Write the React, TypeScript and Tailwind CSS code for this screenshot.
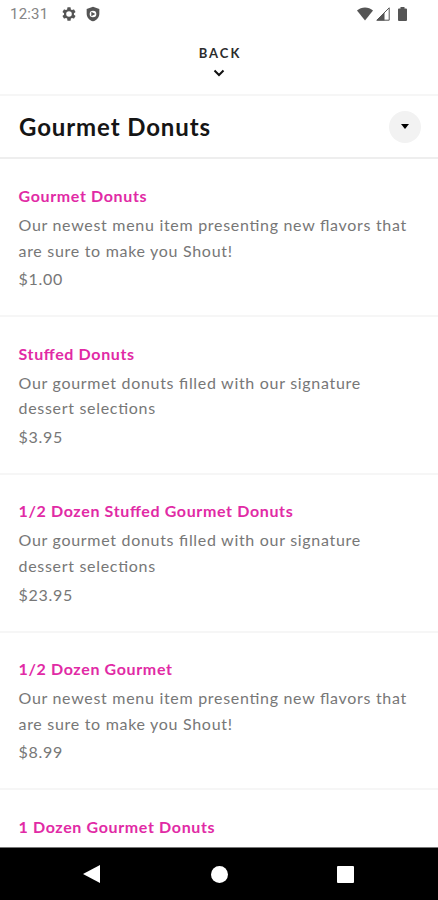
import { ReactNode } from "react";

type MenuItem = {
    name: string;
    description?: string;
    price?: string;
}

const items: MenuItem[] = [
    {
        name: "Gourmet Donuts",
        description: "Our newest menu item presenting new flavors that are sure to make you Shout!",
        price: "$1.00",
    },
    {
        name: "Stuffed Donuts",
        description: "Our gourmet donuts filled with our signature dessert selections",
        price: "$3.95",
    },
    {
        name: "1/2 Dozen Stuffed Gourmet Donuts",
        description: "Our gourmet donuts filled with our signature dessert selections",
        price: "$23.95",
    },
    {
        name: "1/2 Dozen Gourmet",
        description: "Our newest menu item presenting new flavors that are sure to make you Shout!",
        price: "$8.99",
    },
    {
        name: "1 Dozen Gourmet Donuts",
    },
];

export default function App() {
    return (
        <Screen>
            <StatusBar />
            <BackButton />
            <CategoryHeader />
            <main className="min-h-0 flex-1 overflow-hidden pt-[0.6px]">
                {items.map((item) => (
                    <MenuRow key={item.name} item={item} />
                ))}
            </main>
            <NavigationBar />
        </Screen>
    )
}

function Screen({ children }: { children: ReactNode }) {
    return (
        <div className="flex h-[900px] w-full flex-col overflow-hidden bg-white font-[Lato,sans-serif] [font-feature-settings:'liga']">
            {children}
        </div>
    )
}

function StatusBar() {
    return (
        <div className="flex h-7 shrink-0 items-center pr-[31px] pl-[10px] text-[#555]">
            <span className="w-[51px] font-[Roboto,sans-serif] text-[15px] tracking-[0.2px] text-[#858585]">12:31</span>
            <svg className="h-4 w-4" viewBox="0 0 24 24" fill="currentColor">
                <path fillRule="evenodd" d="M19.4 13a7 7 0 0 0 0-2l2.1-1.6a.5.5 0 0 0 .1-.7l-2-3.4a.5.5 0 0 0-.6-.2l-2.5 1a7 7 0 0 0-1.7-1L14.4 2.4a.5.5 0 0 0-.5-.4h-3.8a.5.5 0 0 0-.5.4l-.4 2.7a7 7 0 0 0-1.7 1L5 5.1a.5.5 0 0 0-.6.2l-2 3.4a.5.5 0 0 0 .1.7L4.6 11a7 7 0 0 0 0 2l-2.1 1.6a.5.5 0 0 0-.1.7l2 3.4c.1.2.4.3.6.2l2.5-1a7 7 0 0 0 1.7 1l.4 2.7c0 .2.2.4.5.4h3.8c.3 0 .5-.2.5-.4l.4-2.7a7 7 0 0 0 1.7-1l2.5 1c.2.1.5 0 .6-.2l2-3.4a.5.5 0 0 0-.1-.7zM12 16.2a4.2 4.2 0 1 1 0-8.4 4.2 4.2 0 0 1 0 8.4z" />
            </svg>
            <svg className="ml-[8px] h-4 w-4" viewBox="0 0 24 24" fill="currentColor">
                <path fillRule="evenodd" d="M12 1 2.5 4.500v7c0 5.500 4 10 9.500 11.500 5.500-1.500 9.500-6 9.500-11.500v-7zm0 6A5 5 0 1 1 12 17 5 5 0 0 1 12 7z" />
                <path d="M9.500 8.500v7l6-3.500z" />
            </svg>
            <svg className="ml-auto h-[14px] w-4" viewBox="0 0 16 14" fill="currentColor">
                <path d="M0 3.500C4.500-.6 11.500-.6 16 3.500L8 13.500z" />
            </svg>
            <svg className="ml-[3px] h-[14px] w-[14px]" viewBox="0 0 14 14" fill="currentColor">
                <path d="M.8 13.200 13.200.8v12.400z" fill="none" stroke="currentColor" />
                <path d="M.5 13.500 8.500 5.500v8z" />
            </svg>
            <svg className="ml-2 h-[14px] w-[9px]" viewBox="0 0 9 14" fill="currentColor">
                <path d="M2.500 0h4v1.500H8q1 0 1 1V13q0 1-1 1H1q-1 0-1-1V2.500q0-1 1-1h1.500z" />
            </svg>
        </div>
    )
}

function BackButton() {
    return (
        <button className="flex h-[68px] shrink-0 flex-col items-center border-b-2 border-[#f6f6f6] pt-[15px] text-[#2c2c2c]">
            <span className="pl-[2px] text-[13px] leading-5 font-bold tracking-[2px]">BACK</span>
            <svg className="mt-[6px] h-[8px] w-3" viewBox="0 0 12 8" fill="none" stroke="#111" strokeWidth="2">
                <path d="m1.500 1.500 4.500 4.500 4.500-4.500" />
            </svg>
        </button>
    )
}

function CategoryHeader() {
    return (
        <header className="flex h-[63px] shrink-0 items-center justify-between border-b-2 border-[#eeeeee] pr-[17px] pl-[19px]">
            <h1 className="text-2xl font-bold tracking-[0.88px] text-[#151515]">Gourmet Donuts</h1>
            <button className="flex h-8 w-8 items-center justify-center rounded-full bg-[#f2f2f2]">
                <svg className="h-[5px] w-2" viewBox="0 0 8 5" fill="#000">
                    <path d="M0 0h8L4 5z" />
                </svg>
            </button>
        </header>
    )
}

function MenuRow({ item }: { item: MenuItem }) {
    return (
        <article className="h-[157.700px] border-b-2 border-[#f6f6f6] px-[18.500px] pt-[23.500px]">
            <h2 className="text-base leading-[26px] font-bold tracking-[0.64px] text-[#e12aa5]">{item.name}</h2>
            {item.description && (
                <p className="mt-[3px] text-base leading-[25.600px] tracking-[0.700px] text-[#777777]">{item.description}</p>
            )}
            {item.price && (
                <p className="mt-[3px] text-base leading-[25.600px] tracking-[0.700px] text-[#777777]">{item.price}</p>
            )}
        </article>
    )
}

function NavigationBar() {
    return (
        <nav className="flex h-[53px] shrink-0 items-center border-t border-[#777] bg-black pr-[84px] pl-[83px]">
            <svg className="h-[18px] w-[17px]" viewBox="0 0 17 18" fill="#fff">
                <path d="M17 0v18L0 9z" />
            </svg>
            <span className="ml-[111px] h-[17px] w-[17px] rounded-full bg-white" />
            <span className="ml-auto h-[17px] w-[17px] rounded-[1px] bg-white" />
        </nav>
    )
}
